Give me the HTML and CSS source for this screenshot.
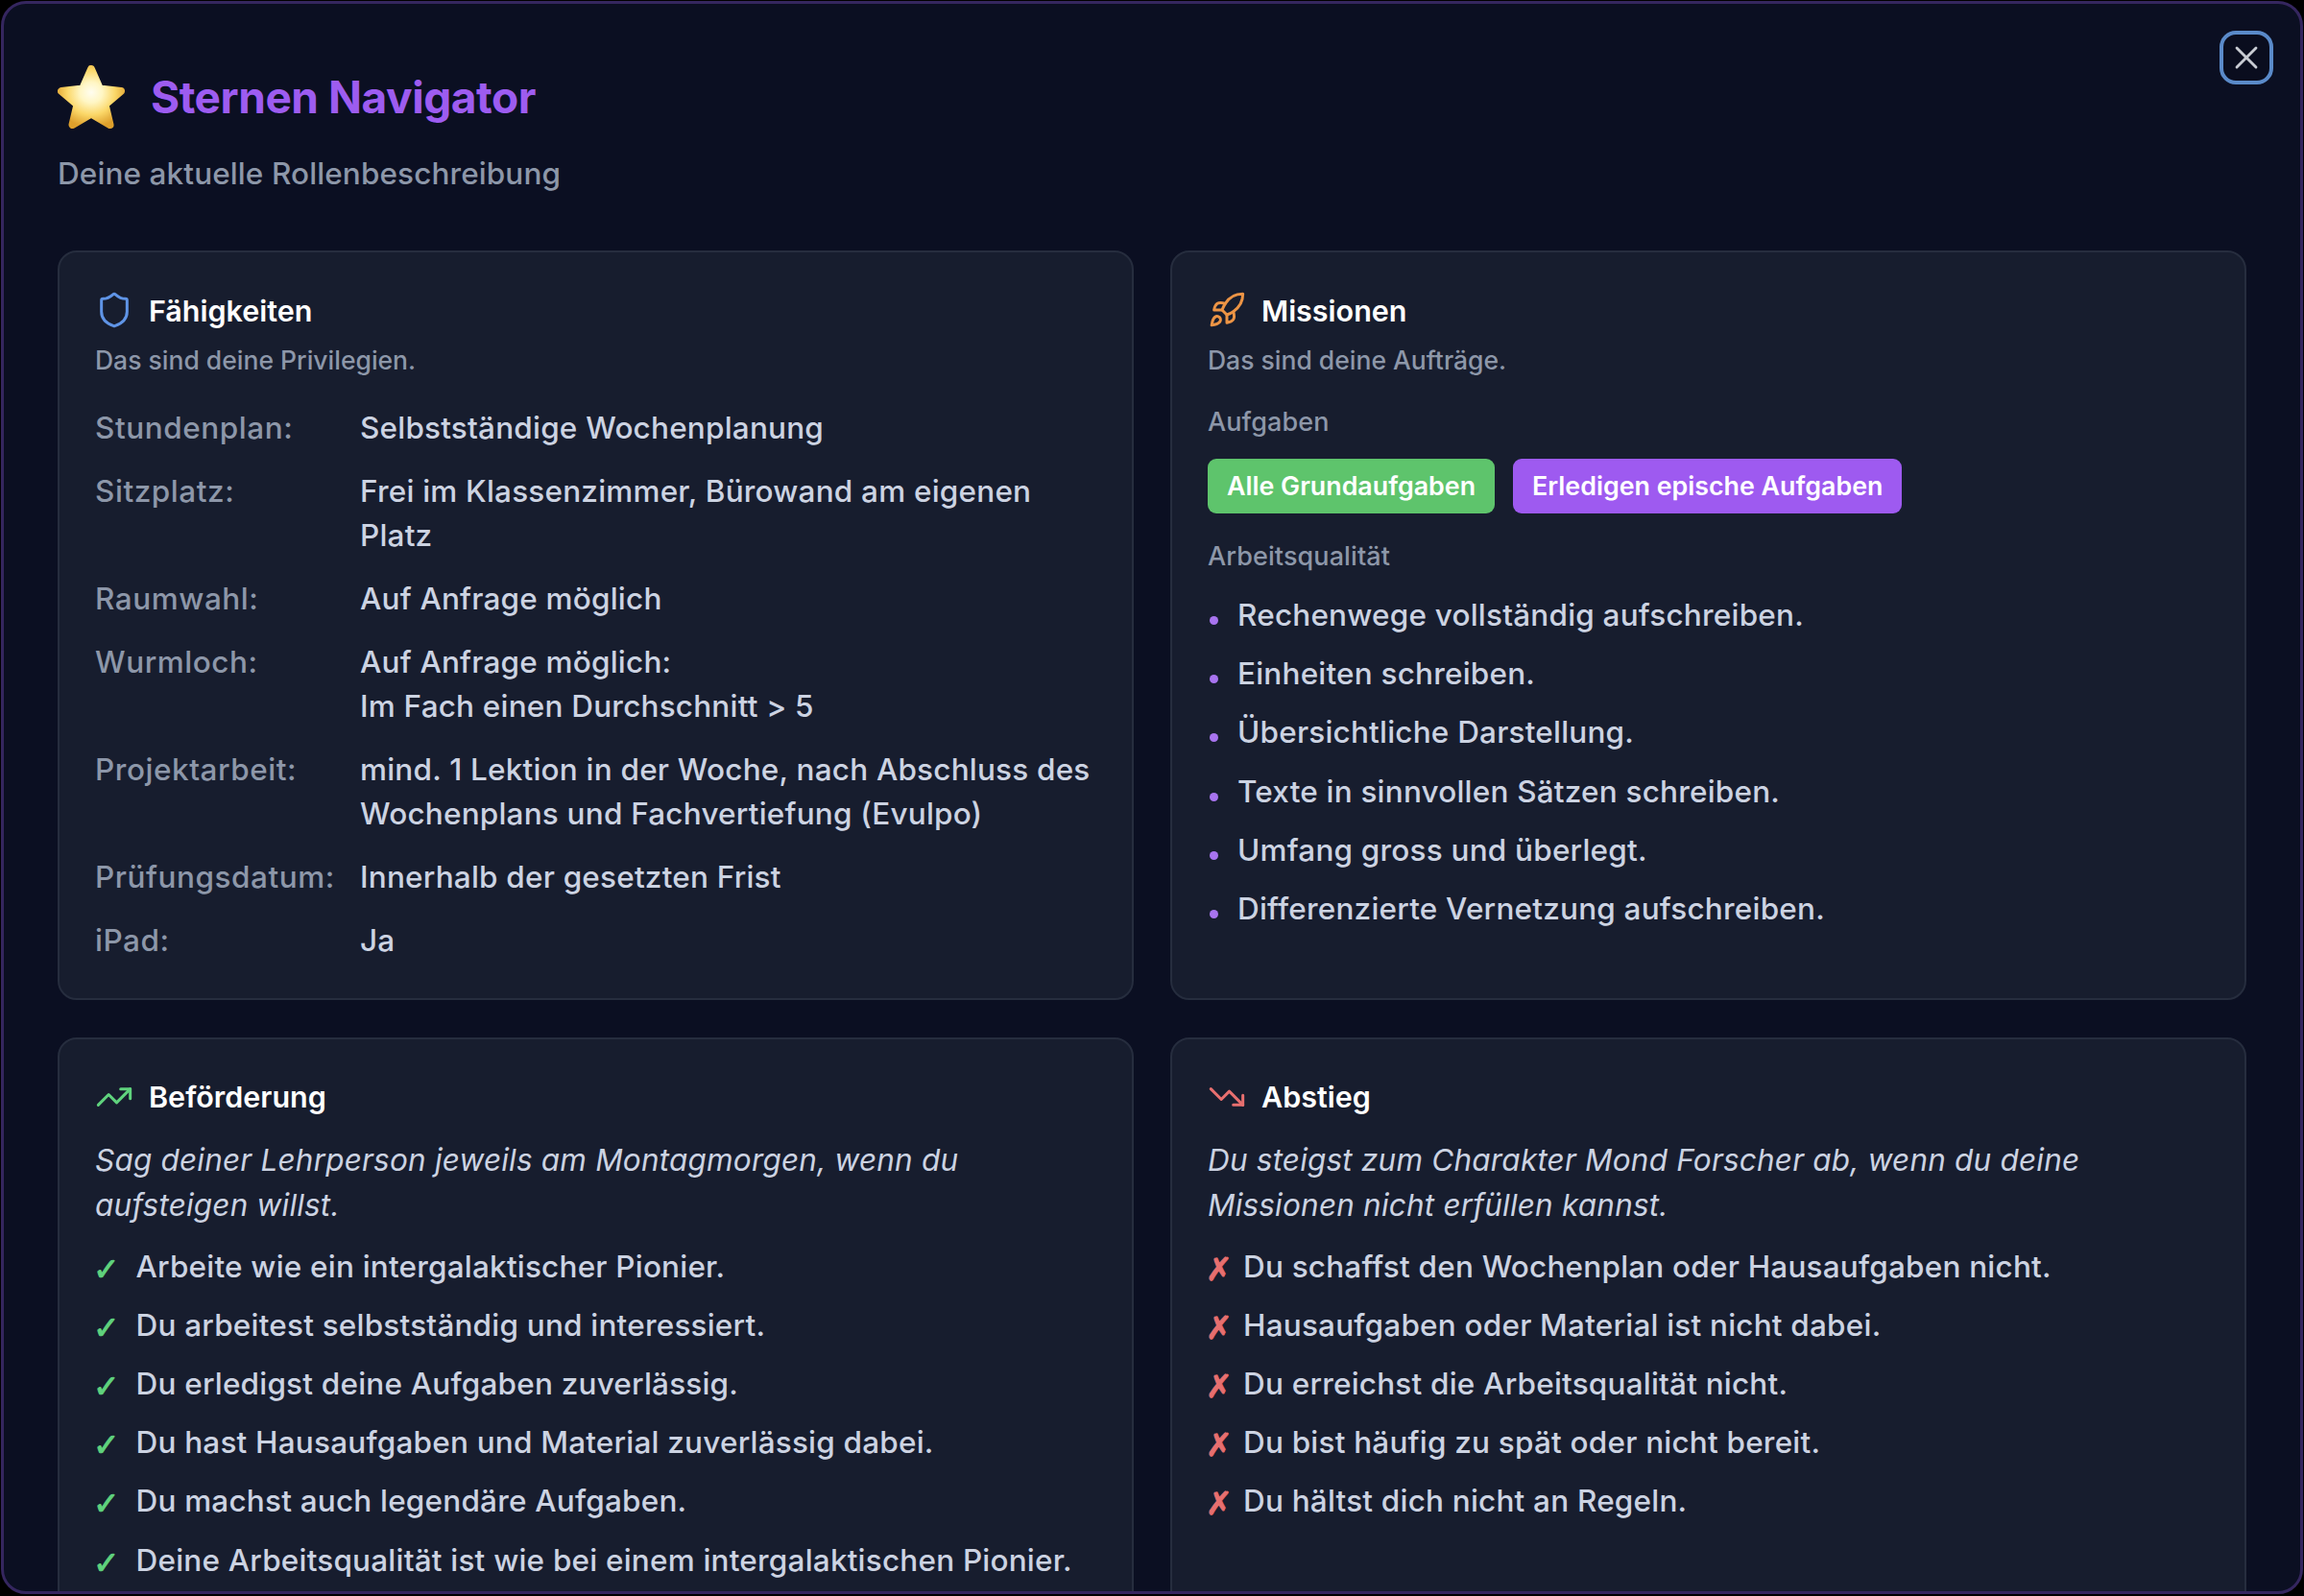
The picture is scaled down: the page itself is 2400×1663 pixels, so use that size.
FILE: index.html
```html
<!DOCTYPE html>
<html lang="de">
<head>
<meta charset="utf-8">
<title>Sternen Navigator</title>
<link rel="stylesheet" href="styles.css">
</head>
<body>
<main class="modal">
  <button class="close" aria-label="Schliessen">
    <svg viewBox="0 0 24 24" class="close-icon"><path d="M18 6 6 18"/><path d="m6 6 12 12"/></svg>
  </button>
  <header class="head">
    <h1 class="title">
      <svg class="star" viewBox="0 0 70 66">
        <defs>
          <radialGradient id="starfill" cx="50%" cy="42%" r="62%">
            <stop offset="0" stop-color="#fffdf0"/>
            <stop offset="0.3" stop-color="#fff6c4"/>
            <stop offset="0.65" stop-color="#fbd768"/>
            <stop offset="1" stop-color="#dd9f2c"/>
          </radialGradient>
        </defs>
        <path class="star-shape" d="M35 4 L44 24.5 L66 27 L49.5 41 L54.5 62 L35 50.5 L15.5 62 L20.5 41 L4 27 L26 24.5 Z"/>
      </svg>
      <span>Sternen Navigator</span>
    </h1>
    <p class="subtitle">Deine aktuelle Rollenbeschreibung</p>
  </header>

  <div class="cards">
    <section class="card card-top">
      <h2 class="card-title">
        <svg class="icon icon-blue" viewBox="0 0 24 24"><path d="M20 13c0 5-3.5 7.5-7.66 8.95a1 1 0 0 1-.67-.01C7.5 20.5 4 18 4 13V6a1 1 0 0 1 1-1c2 0 4.5-1.2 6.24-2.72a1.17 1.17 0 0 1 1.52 0C14.51 3.81 17 5 19 5a1 1 0 0 1 1 1z"/></svg>
        Fähigkeiten
      </h2>
      <p class="card-sub">Das sind deine Privilegien.</p>
      <dl class="facts">
        <dt>Stundenplan:</dt><dd>Selbstständige Wochenplanung</dd>
        <dt>Sitzplatz:</dt><dd>Frei im Klassenzimmer, Bürowand am eigenen Platz</dd>
        <dt>Raumwahl:</dt><dd>Auf Anfrage möglich</dd>
        <dt>Wurmloch:</dt><dd>Auf Anfrage möglich:<br>Im Fach einen Durchschnitt &gt; 5</dd>
        <dt>Projektarbeit:</dt><dd>mind. 1 Lektion in der Woche, nach Abschluss des Wochenplans und Fachvertiefung (Evulpo)</dd>
        <dt>Prüfungsdatum:</dt><dd>Innerhalb der gesetzten Frist</dd>
        <dt>iPad:</dt><dd>Ja</dd>
      </dl>
    </section>

    <section class="card card-top">
      <h2 class="card-title">
        <svg class="icon icon-orange" viewBox="0 0 24 24"><path d="M4.5 16.5c-1.5 1.26-2 5-2 5s3.74-.5 5-2c.71-.84.7-2.13-.09-2.91a2.18 2.18 0 0 0-2.91-.09z"/><path d="m12 15-3-3a22 22 0 0 1 2-3.95A12.88 12.88 0 0 1 22 2c0 2.72-.78 7.5-6 11a22.35 22.35 0 0 1-4 2z"/><path d="M9 12H4s.55-3.03 2-4c1.62-1.08 5 0 5 0"/><path d="M12 15v5s3.03-.55 4-2c1.08-1.62 0-5 0-5"/></svg>
        Missionen
      </h2>
      <p class="card-sub">Das sind deine Aufträge.</p>
      <h3 class="label label-first">Aufgaben</h3>
      <div class="badges">
        <span class="badge badge-green">Alle Grundaufgaben</span>
        <span class="badge badge-purple">Erledigen epische Aufgaben</span>
      </div>
      <h3 class="label label-second">Arbeitsqualität</h3>
      <ul class="list bullets">
        <li>Rechenwege vollständig aufschreiben.</li>
        <li>Einheiten schreiben.</li>
        <li>Übersichtliche Darstellung.</li>
        <li>Texte in sinnvollen Sätzen schreiben.</li>
        <li>Umfang gross und überlegt.</li>
        <li>Differenzierte Vernetzung aufschreiben.</li>
      </ul>
    </section>

    <section class="card card-low">
      <h2 class="card-title">
        <svg class="icon icon-green" viewBox="0 0 24 24"><path d="M16 7h6v6"/><path d="m22 7-8.5 8.5-5-5L2 17"/></svg>
        Beförderung
      </h2>
      <p class="lead">Sag deiner Lehrperson jeweils am Montagmorgen, wenn du aufsteigen willst.</p>
      <ul class="list marks">
        <li><span class="mark mark-yes">✓</span>Arbeite wie ein intergalaktischer Pionier.</li>
        <li><span class="mark mark-yes">✓</span>Du arbeitest selbstständig und interessiert.</li>
        <li><span class="mark mark-yes">✓</span>Du erledigst deine Aufgaben zuverlässig.</li>
        <li><span class="mark mark-yes">✓</span>Du hast Hausaufgaben und Material zuverlässig dabei.</li>
        <li><span class="mark mark-yes">✓</span>Du machst auch legendäre Aufgaben.</li>
        <li><span class="mark mark-yes">✓</span>Deine Arbeitsqualität ist wie bei einem intergalaktischen Pionier.</li>
      </ul>
    </section>

    <section class="card card-low">
      <h2 class="card-title">
        <svg class="icon icon-red" viewBox="0 0 24 24"><path d="M16 17h6v-6"/><path d="m22 17-8.5-8.5-5 5L2 7"/></svg>
        Abstieg
      </h2>
      <p class="lead">Du steigst zum Charakter Mond Forscher ab, wenn du deine Missionen nicht erfüllen kannst.</p>
      <ul class="list marks">
        <li><span class="mark mark-no">✗</span>Du schaffst den Wochenplan oder Hausaufgaben nicht.</li>
        <li><span class="mark mark-no">✗</span>Hausaufgaben oder Material ist nicht dabei.</li>
        <li><span class="mark mark-no">✗</span>Du erreichst die Arbeitsqualität nicht.</li>
        <li><span class="mark mark-no">✗</span>Du bist häufig zu spät oder nicht bereit.</li>
        <li><span class="mark mark-no">✗</span>Du hältst dich nicht an Regeln.</li>
      </ul>
    </section>
  </div>
</main>
</body>
</html>
```
FILE: styles.css
```css
* { box-sizing: border-box; }
html, body { margin: 0; height: 100%; background: #000; overflow: hidden; }
body { font-family: Inter, "Liberation Sans", sans-serif; font-weight: 450; color: #ccd3e2; padding: 1px 0 0 1px; }

.modal {
  position: relative;
  width: 2398px;
  height: 1660px;
  padding: 62px 56px 0;
  overflow: hidden;
  border: 3px solid #35265f;
  border-radius: 26px;
  background: #0b0f22;
}

.close {
  position: absolute;
  top: 28px;
  right: 28px;
  width: 56px;
  height: 56px;
  padding: 0;
  display: flex;
  align-items: center;
  justify-content: center;
  background: #0a0d1e;
  border: 4px solid #5a8ac9;
  border-radius: 17px;
}
.close-icon { width: 40px; height: 40px; fill: none; stroke: #c9ccd3; stroke-width: 1.7; stroke-linecap: round; }

.title { display: flex; align-items: center; gap: 27px; margin: 0; height: 70px; font-size: 46px; font-weight: 700; letter-spacing: -0.45px; color: #9d5cf0; }
.star { width: 70px; height: 66px; flex: none; }
.star-shape { fill: url(#starfill); stroke: url(#starfill); stroke-width: 8; stroke-linejoin: round; }
.subtitle { margin: 22px 0 0; font-size: 31.5px; line-height: 46px; letter-spacing: 0.1px; color: #8d97a9; }

.cards { display: grid; grid-template-columns: 1fr 1fr; gap: 39px 38px; margin-top: 57px; }
.card { padding: 37px 37px 0; border: 2px solid #262d3e; border-radius: 20px; background: #171d2e; }
.card-top { padding-bottom: 37px; }
.card-low { padding-bottom: 60px; }

.card-title { display: flex; align-items: center; gap: 16px; margin: 0; height: 46px; font-size: 30.5px; font-weight: 600; color: #fff; }
.icon { width: 40px; height: 40px; flex: none; fill: none; stroke-width: 1.8; stroke-linecap: round; stroke-linejoin: round; }
.icon-blue { stroke: #5f94e6; }
.icon-orange { stroke: #ec9445; }
.icon-green { stroke: #5fd27d; }
.icon-red { stroke: #e76f6f; }

.card-sub { margin: 11px 0 0; font-size: 26.5px; line-height: 36px; color: #8d97a9; }

.facts { display: grid; grid-template-columns: 276px 1fr; row-gap: 20px; margin: 29.5px 0 0; font-size: 31.5px; line-height: 46px; letter-spacing: 0.2px; }
.facts dt { font-weight: 500; letter-spacing: 0.55px; color: #8d97a9; }
.facts dd { margin: 0; color: #ccd3e2; }

.label { margin: 0; font-size: 27px; line-height: 36px; letter-spacing: 0.1px; font-weight: 450; color: #8d97a9; }
.label-first { margin-top: 29px; }
.label-second { margin-top: 27px; }

.badges { display: flex; gap: 19px; margin-top: 20px; }
.badge { display: flex; align-items: center; height: 57px; padding: 0 20px 2px; border-radius: 9px; font-size: 26.8px; font-weight: 600; color: #fff; }
.badge-green { background: #5ec46c; }
.badge-purple { background: #9e5af0; }

.list { list-style: none; margin: 0; padding: 0; font-size: 31.5px; line-height: 46.4px; letter-spacing: 0.2px; color: #ccd3e2; }
.list li { margin-top: 14.8px; }
.bullets { margin-top: 20px; }
.bullets li { position: relative; padding-left: 31px; }
.bullets li::before { content: ""; position: absolute; left: 2px; top: 24px; width: 9px; height: 9px; border-radius: 50%; background: #a874ef; }

.lead { margin: 19px 0 0; font-size: 31.5px; line-height: 47px; letter-spacing: 0.2px; font-style: italic; color: #ccd3e2; }
.marks { margin-top: 18px; }
.mark { display: inline-block; margin-left: -2px; font-family: "DejaVu Sans", sans-serif; font-size: 33px; font-weight: 700; line-height: 1; vertical-align: -3px; letter-spacing: 0; -webkit-text-stroke: 1px currentColor; }
.mark-yes { width: 44.5px; color: #5fd27d; }
.mark-no { width: 39px; color: #e76f6f; }
```
